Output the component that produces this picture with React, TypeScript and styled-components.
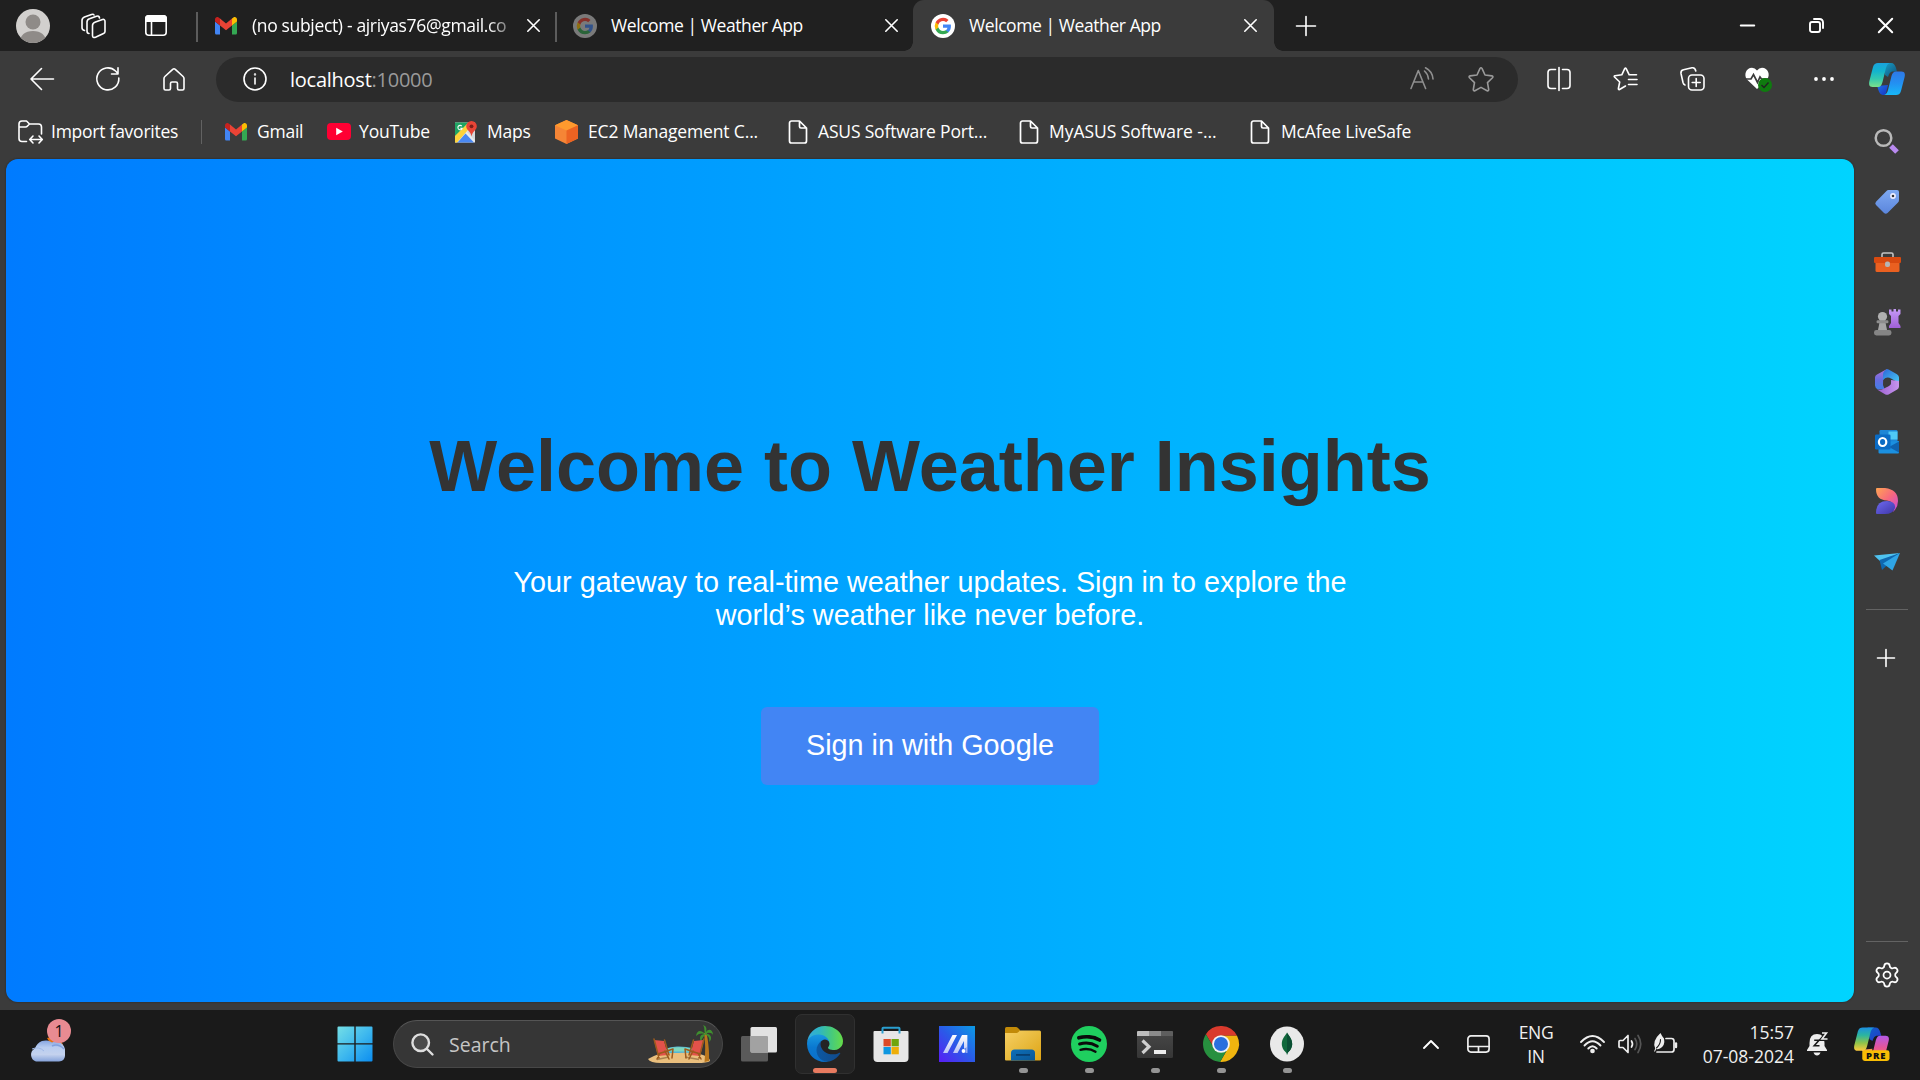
import React from "react";
import styled, { createGlobalStyle, css } from "styled-components";
import { Settings } from "lucide-react";

const ui = `"Open Sans", "Noto Sans", sans-serif`;
const arial = `"Liberation Sans", Arial, sans-serif`;

const GlobalStyle = createGlobalStyle`
  * { box-sizing: border-box; }
  html, body { margin: 0; padding: 0; background: #3b3b3b; }
  body { overflow: hidden; }
`;

const Screen = styled.div`
  width: 1920px;
  height: 1080px;
  display: flex;
  flex-direction: column;
  background: #3b3b3b;
  color: #fff;
  font-family: ${ui};
  overflow: hidden;
`;

const Cell = styled.div<{ $w: number }>`
  width: ${(p) => p.$w}px;
  height: 100%;
  flex: none;
  display: flex;
  align-items: center;
  justify-content: center;
`;

const Svg = styled.svg`
  display: block;
  flex: none;
  overflow: visible;
`;

const Label = styled.span<{ $ls?: number }>`
  font-size: 17.5px;
  line-height: 24px;
  letter-spacing: ${(p) => p.$ls ?? 0}px;
  white-space: nowrap;
  margin-bottom: 2px;
`;

/* ---------- tab strip ---------- */
const TabStrip = styled.header`
  height: 51px;
  flex: none;
  display: flex;
  align-items: center;
  background: #202020;
`;

const Avatar = styled.div`
  width: 34px;
  height: 34px;
  border-radius: 50%;
  overflow: hidden;
  background: #d2d0ce;
`;

const Tab = styled.div<{ $active?: boolean; $w: number }>`
  position: relative;
  width: ${(p) => p.$w}px;
  height: 51px;
  flex: none;
  display: flex;
  align-items: center;
  padding: 0 ${(p) => (p.$active ? 17 : 15)}px 0 18px;
  ${(p) =>
    p.$active
      ? css`
          background: #3b3b3b;
          border-radius: 11px 11px 0 0;
          &::before,
          &::after {
            content: "";
            position: absolute;
            bottom: 0;
            width: 9px;
            height: 9px;
          }
          &::before {
            left: -9px;
            background: radial-gradient(circle at 0 0, #202020 8.5px, #3b3b3b 9px);
          }
          &::after {
            right: -9px;
            background: radial-gradient(circle at 100% 0, #202020 8.5px, #3b3b3b 9px);
          }
        `
      : css`
          &::before {
            content: "";
            position: absolute;
            left: 0;
            top: 12px;
            width: 2px;
            height: 30px;
            background: #5c5c5c;
          }
        `}
`;

const TabTitle = styled(Label)<{ $fade?: boolean }>`
  flex: none;
  width: 266px;
  margin-left: 14px;
  margin-right: auto;
  ${(p) =>
    p.$fade &&
    css`
      mask-image: linear-gradient(to right, #000 236px, transparent 268px);
    `}
`;

const Spacer = styled.div`
  flex: 1;
`;

/* ---------- toolbar ---------- */
const Toolbar = styled.div`
  height: 57px;
  flex: none;
  display: flex;
  align-items: center;
  padding: 0 0 1px 9px;
`;

const AddressBar = styled.div`
  width: 1302px;
  height: 45px;
  margin: 0 8px 0 9px;
  display: flex;
  align-items: center;
  padding: 0 9px 0 9px;
  border-radius: 23px;
  background: #2b2b2b;
`;

const Url = styled.span`
  margin: 1px 0 0 5px;
  font-size: 20px;
  line-height: 26px;
  letter-spacing: -0.25px;
  color: #9a9a9a;
`;

const Host = styled.span`
  color: #fff;
`;

/* ---------- body ---------- */
const Body = styled.div`
  flex: 1;
  min-height: 0;
  display: flex;
`;

const Main = styled.div`
  width: 1854px;
  display: flex;
  flex-direction: column;
`;

const Favorites = styled.nav`
  height: 51px;
  flex: none;
  display: flex;
  align-items: center;
  padding: 0 0 4px 18px;
`;

const Favorite = styled.div<{ $w: number; $gap?: number }>`
  width: ${(p) => p.$w}px;
  flex: none;
  display: flex;
  align-items: center;
  gap: ${(p) => p.$gap ?? 10}px;
`;

const FavDivider = styled.div`
  width: 1px;
  height: 24px;
  margin-right: 23px;
  background: #626262;
`;

const Page = styled.main`
  flex: 1;
  margin: 0 0 8px 6px;
  border-radius: 12px;
  background: linear-gradient(to right, #007bff, #00d4ff);
  display: flex;
  flex-direction: column;
  align-items: center;
  font-family: ${arial};
  box-shadow: 0 0 2px #222;
`;

const Title = styled.h1`
  margin: 266px 0 0;
  font-size: 72px;
  line-height: 82px;
  font-weight: 700;
  white-space: nowrap;
  color: #333;
`;

const Lead = styled.p`
  width: 900px;
  margin: 59px 0 0;
  text-align: center;
  font-size: 28.8px;
  line-height: 33px;
`;

const SignIn = styled.button`
  width: 338px;
  height: 78px;
  margin-top: 75px;
  padding: 0 0 2px;
  border: 0;
  border-radius: 6px;
  background: #4285f4;
  color: #fff;
  font: 28.8px ${arial};
`;

/* ---------- sidebar ---------- */
const Sidebar = styled.aside`
  width: 66px;
  display: flex;
  flex-direction: column;
  align-items: center;
  padding-top: 2px;
`;

const SideItem = styled.div<{ $h?: number }>`
  width: 66px;
  height: ${(p) => p.$h ?? 60}px;
  flex: none;
  display: flex;
  align-items: center;
  justify-content: center;
`;

const SideRule = styled.div<{ $top: number; $bottom: number }>`
  width: 42px;
  height: 1px;
  flex: none;
  margin: ${(p) => p.$top}px 0 ${(p) => p.$bottom}px;
  background: #636363;
`;

/* ---------- taskbar ---------- */
const Taskbar = styled.footer`
  height: 70px;
  flex: none;
  display: flex;
  align-items: center;
  padding-bottom: 2px;
  background: #1a1a1a;
`;

const Weather = styled.div`
  position: relative;
  width: 320px;
  height: 70px;
  padding: 29px 0 0 29px;
  flex: none;
`;

const Badge = styled.span`
  position: absolute;
  left: 47px;
  top: 10px;
  width: 24px;
  height: 24px;
  border-radius: 50%;
  background: #e98b92;
  color: #111;
  font-size: 16px;
  line-height: 24px;
  text-align: center;
`;

const SearchBox = styled.div`
  width: 330px;
  height: 48px;
  margin: 0 3px;
  display: flex;
  align-items: center;
  padding: 0 9px 0 17px;
  border-radius: 24px;
  border: 1px solid #474747;
  border-top-color: #555;
  background: #363636;
`;

const SearchText = styled.span`
  margin: 0 auto 0 15px;
  font-size: 19.5px;
  color: #c6c6c6;
`;

const AppSlot = styled.div<{ $active?: boolean }>`
  position: relative;
  width: 60px;
  height: 60px;
  margin: 0 3px;
  flex: none;
  display: flex;
  align-items: center;
  justify-content: center;
  border-radius: 7px;
  ${(p) =>
    p.$active &&
    css`
      background: #242424;
      border: 1px solid #303030;
    `}
`;

const Running = styled.i<{ $active?: boolean }>`
  position: absolute;
  bottom: ${(p) => (p.$active ? 0 : 1)}px;
  width: ${(p) => (p.$active ? 24 : 9)}px;
  height: 5px;
  border-radius: 3px;
  background: ${(p) => (p.$active ? "#e87b60" : "#949494")};
`;

const Stack = styled.div<{ $w: number; $right?: boolean; $ls?: number }>`
  width: ${(p) => p.$w}px;
  flex: none;
  display: flex;
  flex-direction: column;
  align-items: ${(p) => (p.$right ? "flex-end" : "center")};
  font-size: 17.5px;
  line-height: 24px;
  letter-spacing: ${(p) => p.$ls ?? 0}px;
  color: #f0f0f0;
`;

/* ---------- icons ---------- */
type LineProps = { w: number; h?: number; sw?: number; c?: string; children: React.ReactNode };
const Line = ({ w, h = w, sw = 1.6, c = "#fff", children }: LineProps) => (
  <Svg width={w} height={h} viewBox={`0 0 ${w} ${h}`} fill="none" stroke={c} strokeWidth={sw} strokeLinecap="round" strokeLinejoin="round">
    {children}
  </Svg>
);

const Grad = ({ id, stops, v }: { id: string; stops: string[]; v?: "h" | "v" | "d" }) => (
  <linearGradient id={id} x1="0" y1="0" x2={v === "v" ? 0 : 1} y2={v === "h" ? 0 : 1}>
    {stops.map((s, i) => (
      <stop key={i} offset={i / (stops.length - 1)} stopColor={s} />
    ))}
  </linearGradient>
);

const CloseIcon = ({ s = 13, sw = 1.6 }) => (
  <Line w={s} sw={sw}>
    <path d={`M.8 .8L${s - 0.8} ${s - 0.8}M${s - 0.8} .8L.8 ${s - 0.8}`} />
  </Line>
);

const GmailIcon = ({ w = 22 }) => (
  <Svg width={w} height={w * 0.8} viewBox="52 42 88 66" preserveAspectRatio="none">
    <path fill="#4285f4" d="M58 108h14V74L52 59v43c0 3.32 2.69 6 6 6" />
    <path fill="#34a853" d="M120 108h14c3.32 0 6-2.69 6-6V59l-20 15" />
    <path fill="#fbbc04" d="M120 48v26l20-15v-8c0-7.42-8.47-11.65-14.4-7.2" />
    <path fill="#ea4335" d="M72 74V48l24 18 24-18v26L96 92" />
    <path fill="#c5221f" d="M52 51v8l20 15V48l-5.6-4.2c-5.94-4.45-14.4-.22-14.4 7.2" />
  </Svg>
);

const GoogleIcon = ({ dim }: { dim?: boolean }) => (
  <Svg width="24" height="24" viewBox="0 0 24 24" opacity={dim ? 0.5 : 1}>
    <circle cx="12" cy="12" r="12" fill={dim ? "#d4d4d4" : "#fff"} />
    <g transform="translate(3 3) scale(.75)">
      <path fill="#4285F4" d="M22.56 12.25c0-.78-.07-1.53-.2-2.25H12v4.26h5.92a5.06 5.06 0 0 1-2.2 3.32v2.77h3.57c2.08-1.92 3.27-4.74 3.27-8.1z" />
      <path fill="#34A853" d="M12 23c2.97 0 5.46-.98 7.28-2.66l-3.57-2.77c-.98.66-2.23 1.06-3.71 1.06-2.86 0-5.29-1.93-6.16-4.53H2.18v2.84A11 11 0 0 0 12 23z" />
      <path fill="#FBBC05" d="M5.84 14.09a6.6 6.6 0 0 1 0-4.18V7.07H2.18a11 11 0 0 0 0 9.86z" />
      <path fill="#EA4335" d="M12 5.38c1.62 0 3.06.56 4.21 1.64l3.15-3.15A11 11 0 0 0 2.18 7.07l3.66 2.84C6.71 7.31 9.14 5.38 12 5.38z" />
    </g>
  </Svg>
);

const FileIcon = () => (
  <Line w={20} h={24} sw={1.7}>
    <path d="M3.5 1H11.5L18.5 8V21A2 2 0 0 1 16.5 23H3.5A2 2 0 0 1 1.5 21V3A2 2 0 0 1 3.5 1ZM11.5 1V6.5A1.5 1.5 0 0 0 13 8H18.5" />
  </Line>
);

const ImportIcon = () => (
  <Line w={25} h={24}>
    <path d="M8.5 21.5H4A3 3 0 0 1 1 18.5V4A3 3 0 0 1 4 1H8.5L11.5 4H20.5A3 3 0 0 1 23.5 7V14M1 7H7.5Q8.7 7 9.5 6L11.5 4" />
    <path d="M12 19.5H24M15 16L11.7 19.5L15 23M21 16L24.3 19.5L21 23" />
  </Line>
);

const YouTubeIcon = () => (
  <Svg width="24" height="17" viewBox="0 0 24 17">
    <rect width="24" height="17" rx="4" fill="#ff0033" />
    <path d="M9.2 4.8V12.2L15.8 8.5Z" fill="#fff" />
  </Svg>
);

const MapsIcon = () => (
  <Svg width="22" height="22" viewBox="0 0 22 22">
    <path d="M0 1.500H20V21.500H0Z" fill="#e8eaed" />
    <path d="M0 1.500H14L0 15.500Z" fill="#1fa463" />
    <path d="M0 15L13.500 1.500H17V4.500L2 21.500H0Z" fill="#fdd33c" />
    <path d="M2.500 21.500L10.500 12.500L19 21.500Z" fill="#4a89f3" />
    <path d="M12 11L20 19.500V4Z" fill="#d6d8db" />
    <path d="M6.800 5.200A2.200 2.200 0 1 0 7.200 7.300H5.200" stroke="#fff" strokeWidth="1.100" fill="none" />
    <path d="M16.500 0A5.300 5.300 0 0 1 21.800 5.300C21.800 9 17.500 10 16.600 15.500C15.500 10 11.200 9 11.200 5.300A5.300 5.300 0 0 1 16.500 0Z" fill="#e84436" />
    <circle cx="16.500" cy="5.300" r="1.900" fill="#7e1f18" />
  </Svg>
);

const Ec2Icon = () => (
  <Svg width="23" height="24" viewBox="0 0 23 24">
    <path d="M11.500 0L23 5.200V18.500L11.500 24L0 18.500V5.200Z" fill="#f58536" />
    <path d="M11.500 0L23 5.200L11.500 10.500L0 5.200Z" fill="#ff9a2e" />
    <path d="M11.500 10.500L23 5.200V18.500L11.500 24Z" fill="#ec6322" />
  </Svg>
);

const CopilotIcon = ({ id, pre }: { id: string; pre?: boolean }) => (
  <Svg width="36" height={pre ? 34 : 32} viewBox={pre ? "0 0 37 34" : "0 0 36 32"}>
    <defs>
      <Grad id={id + "a"} v="v" stops={pre ? ["#1c8fe0", "#2bb5a0", "#8fc34a", "#ffc93c"] : ["#1aa3dd", "#12b4cf", "#35c9ae", "#7be08a"]} />
      <Grad id={id + "b"} stops={pre ? ["#0f63c9", "#2438c8"] : ["#17a2c9", "#12507a"]} />
      <Grad id={id + "c"} v="v" stops={pre ? ["#b45ae8", "#e4559a", "#ff7a55"] : ["#2f78e6", "#2390f2", "#17b8f8"]} />
      <Grad id={id + "d"} stops={pre ? ["#ffb347", "#f0704a"] : ["#1e6fe8", "#1733c0"]} />
    </defs>
    <path fill={`url(#${id}b)`} d="M14 0H22C25 0 26 2 27 5L28 8.500H24C21 8.500 20 11 19 14L16 12Z" />
    <path fill={`url(#${id}d)`} d="M8 23L19 22L18 26C17.300 29 17 32 15 32C11 32 10 29.500 8.500 24Z" />
    <path fill={`url(#${id}a)`} d="M9 0H21C17.500 1 17 5 16 9L13.500 19C12.500 22.500 11.500 24 9 24H3.500C0 24 -.3 21 .4 18L4 4C5 1 6.500 0 9 0Z" />
    <path fill={`url(#${id}c)`} d="M27 8.500H32.500C36 8.500 36.300 11.500 35.600 14L32 28C31 31 29.500 32 27 32H15C18.500 31 19 27 20 23L22.500 13C23.500 10 24.500 8.500 27 8.500Z" />
    {pre && (
      <>
        <rect x="8.500" y="23.500" width="28" height="11" rx="2.500" fill="#f8bd05" />
        <text x="22.800" y="32.500" textAnchor="middle" fontSize="9.800" fontWeight="800" letterSpacing=".9" fontFamily="Open Sans, sans-serif" fill="#111">
          PRE
        </text>
      </>
    )}
  </Svg>
);

const EdgeIcon = () => (
  <Svg width="36" height="36" viewBox="0 0 256 256">
    <defs>
      <Grad id="e1" v="h" stops={["#0c59a4", "#114a8b"]} />
      <Grad id="e2" v="v" stops={["#1b9de2", "#0a78d0", "#0b6fca"]} />
      <Grad id="e3" v="h" stops={["#35a9dc", "#2fb5c4", "#45c97f", "#66dc48"]} />
    </defs>
    <g transform="translate(-4.630 -4.920)">
      <path fill="url(#e1)" d="M235.680 195.460a93.730 93.730 0 0 1-10.540 4.710 101.870 101.870 0 0 1-35.900 6.460c-47.320 0-88.540-32.550-88.540-74.320A31.480 31.480 0 0 1 117.130 105c-42.800 1.800-53.800 46.400-53.800 72.530 0 73.880 68.090 81.370 82.760 81.370 7.910 0 19.840-2.300 27-4.560l1.310-.44a128.340 128.340 0 0 0 66.600-52.800 4 4 0 0 0-5.320-5.640Z" />
      <path fill="url(#e2)" d="M110.340 246.340A79.200 79.200 0 0 1 87.600 225a80.720 80.720 0 0 1 29.530-120c3.120-1.470 8.450-4.130 15.540-4a32.350 32.350 0 0 1 25.690 13 31.880 31.880 0 0 1 6.360 18.660c0-.21 24.460-79.600-80-79.600-43.900 0-80 41.660-80 78.210a130.150 130.150 0 0 0 12.110 56 128 128 0 0 0 156.380 67.110 75.550 75.550 0 0 1-62.780-8Z" />
      <path fill="url(#e3)" d="M156.940 153.780c-.81 1.050-3.300 2.500-3.300 5.660 0 2.610 1.700 5.120 4.720 7.230 14.380 10 41.490 8.680 41.560 8.680a59.560 59.560 0 0 0 30.270-8.350A61.380 61.380 0 0 0 260.630 114c.26-22.410-8-37.310-11.340-43.910-21.190-41.450-66.930-65.290-116.670-65.290a128 128 0 0 0-128 126.200c.48-36.540 36.800-66.050 80-66.050 3.500 0 23.460.34 42 10.070 16.340 8.580 24.900 18.940 30.850 29.210 6.180 10.670 7.280 24.150 7.280 29.520s-2.740 13.330-7.800 20Z" />
    </g>
  </Svg>
);

const StoreIcon = () => (
  <Svg width="36" height="36" viewBox="0 0 36 36">
    <path d="M9.500 8V2.500Q9.500 1.800 10.300 1.800H25.700Q26.500 1.800 26.500 2.500V8" fill="none" stroke="#2a9fd0" strokeWidth="2" />
    <path d="M.5 6Q.5 5 1.500 5H34.500Q35.500 5 35.500 6V32Q35.500 36 31.500 36H4.500Q.5 36 .5 32Z" fill="#e6e6e6" />
    <path d="M9.500 5V7.500M26.500 5V7.500" stroke="#2a9fd0" strokeWidth="2" />
    <rect x="10.500" y="13" width="7.300" height="7.300" fill="#dd4a26" />
    <rect x="18.500" y="13" width="7.300" height="7.300" fill="#6fa50c" />
    <rect x="10.500" y="21" width="7.300" height="7.300" fill="#0e97e0" />
    <rect x="18.500" y="21" width="7.300" height="7.300" fill="#eeae08" />
  </Svg>
);

const MyAsusIcon = () => (
  <Svg width="36" height="36" viewBox="0 0 36 36">
    <defs>
      <linearGradient id="asus" x1="0" y1="1" x2="1" y2="0">
        <stop offset="0" stopColor="#5a1df5" />
        <stop offset=".5" stopColor="#2a5ae8" />
        <stop offset="1" stopColor="#0b9be4" />
      </linearGradient>
      <Grad id="asus2" v="v" stops={["#ffffff", "#b9c2f5"]} />
    </defs>
    <rect width="36" height="36" fill="url(#asus)" />
    <path fill="url(#asus2)" d="M13.500 9H18L8.500 27H4ZM23 9H28V21L25 23V15L18.500 27H14Z" />
    <circle cx="24.500" cy="25" r="1.900" fill="#fff" />
    <path fill="url(#asus2)" d="M28.500 9V27H26.500V9Z" opacity=".7" />
  </Svg>
);

const FolderIcon = () => (
  <Svg width="36" height="34" viewBox="0 0 36 34">
    <defs>
      <Grad id="fold" stops={["#f7cf63", "#e9bb3e", "#dfa414"]} />
      <Grad id="fold2" stops={["#0e6fb8", "#0a5796"]} />
    </defs>
    <path d="M0 1.500Q0 0 1.500 0H11Q12 0 13 1L15 3V8H0Z" fill="#c28a08" />
    <path d="M0 6H11.500Q12.500 6 13.500 5L15 3.500H34.500Q36 3.500 36 5V32.500Q36 33.500 35 33.500H1Q0 33.500 0 32.500Z" fill="url(#fold)" />
    <path d="M6 33.500V26Q6 22.500 9.500 22.500H26.500Q30 22.500 30 26V33.500Z" fill="url(#fold2)" />
    <rect x="11" y="27" width="14" height="1.800" fill="#083f70" />
  </Svg>
);

const SpotifyIcon = () => (
  <Svg width="36" height="36" viewBox="0 0 36 36" fill="none" stroke="#0b0b0b" strokeLinecap="round">
    <circle cx="18" cy="18" r="18" fill="#1fcf5f" stroke="none" />
    <path d="M7.800 11.800C14 10 22.500 10.500 28.500 14" strokeWidth="3.600" />
    <path d="M8.600 18C14.500 16.300 21 17 26.300 20.200" strokeWidth="3" />
    <path d="M9.500 23.800C14.500 22.500 20 23 24.500 25.700" strokeWidth="2.400" />
  </Svg>
);

const TerminalIcon = () => (
  <Svg width="36" height="27" viewBox="0 0 36 27">
    <defs>
      <Grad id="term" v="v" stops={["#484848", "#363636"]} />
    </defs>
    <rect width="36" height="27" rx="1.500" fill="url(#term)" />
    <path d="M0 5V1Q0 0 1 0H12V5Z" fill="#bdbdbd" />
    <rect x="12" width="12" height="5" fill="#8c8c8c" />
    <path d="M24 0H35Q36 0 36 1V5H24Z" fill="#5e5e5e" />
    <path d="M5.500 9.500L12 15.700L5.500 22" fill="none" stroke="#cfcfcf" strokeWidth="3.200" />
    <rect x="17" y="19" width="12" height="4" fill="#ececec" />
  </Svg>
);

const ChromeIcon = () => (
  <Svg width="36" height="36" viewBox="2 2 44 44">
    <path fill="#d93a2d" d="M24 14H43.600A22 22 0 0 0 5.540 12.030L15.340 29A10 10 0 0 1 24 14Z" />
    <path fill="#f0b50f" d="M43.600 14A22 22 0 0 1 22.860 45.970L32.660 29A10 10 0 0 0 24 14Z" />
    <path fill="#27903f" d="M22.860 45.970A22 22 0 0 1 5.540 12.030L15.340 29A10 10 0 0 0 32.660 29Z" />
    <circle cx="24" cy="24" r="10.800" fill="#f4f4f4" />
    <circle cx="24" cy="24" r="8.600" fill="#2a6fdd" />
  </Svg>
);

const MongoIcon = () => (
  <Svg width="34" height="36" viewBox="0 0 34 36">
    <ellipse cx="17" cy="18" rx="17" ry="17.500" fill="#e9e9e9" />
    <path d="M17 6.500C18 9 22.200 12 22.200 18C22.200 22.500 19 25.500 17.600 27L17 29L16.400 27C15 25.500 11.800 22.500 11.800 18C11.800 12 16 9 17 6.500Z" fill="#10693c" />
    <path d="M17 6.500C18 9 22.200 12 22.200 18C22.200 22.500 19 25.500 17.600 27L17 29Z" fill="#0a4f33" />
  </Svg>
);

const TaskViewIcon = () => (
  <Svg width="36" height="35" viewBox="0 0 36 35">
    <rect y="9" width="27" height="25.500" rx="1.500" fill="#5a5a5a" />
    <rect x="9.500" y="0" width="26.500" height="25.500" rx="1.500" fill="#e2e2e2" />
    <rect x="9.500" y="9" width="17.500" height="16.500" rx="1" fill="#a2a2a2" />
  </Svg>
);

const WindowsIcon = () => (
  <Svg width="36" height="36" viewBox="0 0 36 36">
    <defs>
      <linearGradient id="win" gradientUnits="userSpaceOnUse" x1="0" y1="0" x2="36" y2="36">
        <stop offset="0" stopColor="#76e0e6" />
        <stop offset=".5" stopColor="#3fb9ee" />
        <stop offset="1" stopColor="#0a8cf0" />
      </linearGradient>
    </defs>
    <path fill="url(#win)" d="M1.500 .5H17.300V17.200H.5V1.500Q.5 .5 1.500 .5ZM18.700 .5H34.500Q35.500 .5 35.500 1.500V17.200H18.700ZM.5 18.600H17.300V35.500H1.500Q.5 35.500 .5 34.500ZM18.700 18.600H35.500V34.500Q35.500 35.500 34.500 35.500H18.700Z" />
  </Svg>
);

const BeachIcon = () => (
  <Svg width="66" height="38" viewBox="0 0 66 38">
    <path d="M14 29Q16 22 30 21.500Q48 21 52 29Z" fill="#52b5d6" />
    <path d="M20 23.500Q32 21 44 23.500L42 26.500H22Z" fill="#7fd6bd" />
    <path d="M1 34Q6 31 12 29Q20 27.500 31 28Q48 27 56 30Q63 32 63 36Q60 38 50 38H14Q3 38 1 34Z" fill="#eabf7d" />
    <path d="M10 34.500L22 32M38 32L52 34.500" stroke="#a98250" strokeWidth="1.600" />
    <path d="M57.500 37C58.500 28 58.500 17 57 8L59.500 8C61.500 17 62.500 28 62 36Z" fill="#b9761c" />
    <path d="M58 9C53 4 50 6 49 11C52 8 55 8 58 9C53 9 52 13 54 17C55 13 57 11 58.500 9.500C62 11 63 14 62 17C66 14 64 9 59 8.500C62 7 65 8 66 10C66 5 62 3 59 7C60 3 59 1 56 0C58 3 57 5 58 9Z" fill="#3f8f2f" />
    <path d="M7 15L17 16L21 30L11 31Z" fill="#e2524a" />
    <path d="M7 14L12 33M17.500 15L22 30M11 29L26 24M22 34L18 26M26 24L25 33M10 34L13 28" stroke="#9c5a1d" strokeWidth="1.500" fill="none" strokeLinecap="round" />
    <path d="M57 15L47 16L43 30L53 31Z" fill="#e2524a" />
    <path d="M57 14L52 33M46.500 15L42 30M53 29L38 24M42 34L46 26M38 24L39 33M54 34L51 28" stroke="#9c5a1d" strokeWidth="1.500" fill="none" strokeLinecap="round" />
  </Svg>
);

const CloudIcon = () => (
  <Svg width="37" height="24" viewBox="0 0 37 24">
    <defs>
      <Grad id="cloud" v="v" stops={["#86a5e0", "#b9cdf0", "#c4d2ee", "#86a3da"]} />
    </defs>
    <path d="M18 0Q30 -4 34 7L24 10Z" fill="#e8720c" />
    <path d="M7 23.500A7 7 0 0 1 6 10.500A11 11 0 0 1 23 4.500A9 9 0 0 1 36 13V18Q35.500 23 30 23.500Z" fill="url(#cloud)" />
    <path d="M3 11Q10 8 15 13" stroke="#9fb8e6" fill="none" />
    <path d="M23 8Q29 5 35 11" stroke="#6f93dc" fill="none" strokeWidth="1.500" opacity=".7" />
  </Svg>
);

/* ---------- sidebar icons ---------- */
const SideSearch = () => (
  <Svg width="26" height="26" viewBox="0 0 26 26">
    <circle cx="9.500" cy="10" r="7.800" fill="none" stroke="#b9b9b9" strokeWidth="2.500" />
    <path d="M17 18L23 24" stroke="#b98af0" strokeWidth="5.200" />
  </Svg>
);
const SideTag = () => (
  <Svg width="24" height="24" viewBox="0 0 24 24">
    <defs><Grad id="tag" v="v" stops={["#7ea9f2", "#5b86dc"]} /></defs>
    <path d="M13.500 0H22Q24 0 24 2V10Q24 11.500 23 12.500L12.500 23Q10.800 24.500 9 23L1 15Q-.5 13.500 1 11.800L11.500 1Q12.300 0 13.500 0Z" fill="url(#tag)" />
    <circle cx="18" cy="6" r="2.100" fill="#333" stroke="#eef" strokeWidth="1.600" />
  </Svg>
);
const SideToolbox = () => (
  <Svg width="27" height="20" viewBox="0 0 27 20">
    <path d="M8 6V2.500Q8 1 9.500 1H17.500Q19 1 19 2.500V6" fill="none" stroke="#c4c4c4" strokeWidth="1.600" />
    <path d="M1.500 9H25.500V18.500Q25.500 20 24 20H3Q1.500 20 1.500 18.500Z" fill="#ea6020" />
    <rect y="5" width="27" height="6" rx="1" fill="#d84a10" />
    <rect x="11" y="9.500" width="5" height="5.500" rx="2" fill="#b5b5b5" />
  </Svg>
);
const SideGames = () => (
  <Svg width="27" height="27" viewBox="0 0 27 27">
    <defs><Grad id="rook" v="v" stops={["#c59bf6", "#a05fd8"]} /></defs>
    <path d="M15 .5H17.500V2.500H19.500V0H22V2.500H24V.5H26.500V5L24.500 7V14L26.500 17V19H15V17L17 14V7L15 5Z" fill="url(#rook)" />
    <circle cx="8.500" cy="7.500" r="4.600" fill="#b0b0b0" />
    <path d="M6 11H11L13 21H4Z" fill="#a5a5a5" />
    <rect x="2.500" y="11.300" width="12" height="3" rx="1.400" fill="#8d8d8d" />
    <rect x="0" y="21" width="17.500" height="5.500" rx="2.400" fill="#858585" />
  </Svg>
);
const SideM365 = () => (
  <Svg width="24" height="26" viewBox="0 0 24 26">
    <defs>
      <Grad id="m1" v="v" stops={["#b072d8", "#6a6be0", "#3f7fe6"]} />
      <Grad id="m2" stops={["#2d66d8", "#47cdf4"]} />
      <Grad id="m3" v="h" stops={["#9a5fd0", "#c795ee"]} />
    </defs>
    <path fill="url(#m1)" d="M12 0L9 9L8 16L9.500 20L3 20.500Q0 19 0 16.500V8.500Q0 6.500 2 5.500Z" />
    <path fill="url(#m2)" d="M12 0Q13 0 14 .7L22 5.300Q24 6.500 24 8.500V14L16 9.500Q12 7 8 11V5Q8 2.500 12 0Z" />
    <path fill="url(#m3)" d="M24 12V17.500Q24 19.500 22.200 20.500L14 25.300Q12 26.300 10 25.300L2 20.500Q6 21.500 9 19.500L14 17Q16.500 15.500 16 11Z" />
    <path d="M12 8.800L15.800 11V15.200L12 17.400L8.200 15.200V11Z" fill="#3b3b3b" />
  </Svg>
);
const SideOutlook = () => (
  <Svg width="24" height="24" viewBox="0 0 24 24">
    <rect x="4.500" y="0" width="18" height="16" rx="1.200" fill="#1d86d6" />
    <rect x="13.500" y="1.500" width="9" height="8" fill="#4fc9f6" />
    <path d="M3.500 12L24 11V22.500Q24 23.500 23 23.500H4.500Q3.500 23.500 3.500 22.500Z" fill="#1b90e0" />
    <path d="M24 11.500L14 17L24 22.500Z" fill="#0f62ae" />
    <rect y="4.500" width="15.500" height="15" rx="1.300" fill="#0a6bc4" />
    <ellipse cx="7.600" cy="12" rx="3.700" ry="4" fill="none" stroke="#fff" strokeWidth="2.200" />
  </Svg>
);
const SideDesigner = () => (
  <Svg width="22" height="28" viewBox="0 0 22 28">
    <defs>
      <Grad id="d1" stops={["#ffa552", "#f7687e", "#c347e0"]} />
      <Grad id="d2" stops={["#6f6af0", "#3e36a8"]} />
    </defs>
    <path fill="url(#d1)" d="M1 0H9Q22 1.500 22 13Q22 19.500 17 24Q20 14 11 12.500Q0 12 0 1Q0 0 1 0Z" />
    <path fill="url(#d2)" d="M0 25Q0 13 11 13Q20 13.500 19 20Q17 26 9 26H1Q0 26 0 25Z" />
  </Svg>
);
const SideDrop = () => (
  <Svg width="26" height="18" viewBox="0 0 26 18">
    <path d="M0 2.500L26 0L7 9Z" fill="#4fc3f0" />
    <path d="M5.500 7L26 0L8 17Z" fill="#0f68b0" />
    <path d="M9 10.500L26 0L18.500 17.500Z" fill="#2fa5e6" />
  </Svg>
);

const favorites = [
  { icon: <GmailIcon />, text: "Gmail", w: 102, gap: 10, ls: -0.25 },
  { icon: <YouTubeIcon />, text: "YouTube", w: 128, gap: 8, ls: -0.15 },
  { icon: <MapsIcon />, text: "Maps", w: 100, gap: 10, ls: -0.2 },
  { icon: <Ec2Icon />, text: "EC2 Management C...", w: 233, gap: 10, ls: -0.15 },
  { icon: <FileIcon />, text: "ASUS Software Port...", w: 231, gap: 10, ls: -0.18 },
  { icon: <FileIcon />, text: "MyASUS Software -...", w: 231, gap: 10, ls: -0.05 },
  { icon: <FileIcon />, text: "McAfee LiveSafe", w: 200, gap: 11, ls: -0.15 },
];

export default function App() {
  return (
    <>
      <GlobalStyle />
      <Screen>
        <TabStrip>
          <Cell $w={66}>
            <Avatar>
              <Svg width="34" height="34" viewBox="0 0 34 34">
                <circle cx="17" cy="13" r="7.500" fill="#8f8b88" />
                <path d="M3.500 34C4 26 9 22 17 22S30 26 30.500 34Z" fill="#8f8b88" />
              </Svg>
            </Avatar>
          </Cell>
          <Cell $w={54}>
            <Line w={25} h={24}>
              <path d="M14.500 7.500L21.500 5Q24 4.500 24 7V17Q24 18.500 22.500 19L15 22.500Q11.500 24 11.500 21V11Q11.500 8.500 14.500 7.500Z" transform="translate(0 .5)" />
              <path d="M8 19.500Q6 19.500 6 17V8Q6 5.500 8.500 4.700L15.500 2.200Q18 1.500 18.500 4" />
              <path d="M3.500 16.500Q1 16 1 13.500V6.500Q1 4 3.500 3L10.500 .5Q12.500 0 13 1" />
            </Line>
          </Cell>
          <Cell $w={72}>
            <Svg width="22" height="21" viewBox="0 0 22 21">
              <rect x=".8" y=".8" width="20.400" height="19.400" rx="3" fill="none" stroke="#fff" strokeWidth="1.600" />
              <path d="M0 7V3.500Q0 0 3.500 0H18.500Q22 0 22 3.500V7Z" fill="#fff" />
              <path d="M6.500 7V20" stroke="#fff" strokeWidth="1.600" />
            </Svg>
          </Cell>
          <Cell $w={4} />
          <Tab $w={359}>
            <Cell $w={24}><GmailIcon /></Cell>
            <TabTitle $fade $ls={-0.34}>(no subject) - ajriyas76@gmail.co</TabTitle>
            <CloseIcon />
          </Tab>
          <Tab $w={358}>
            <GoogleIcon dim />
            <TabTitle $ls={-0.42}>Welcome | Weather App</TabTitle>
            <CloseIcon />
          </Tab>
          <Tab $active $w={361}>
            <GoogleIcon />
            <TabTitle $ls={-0.42}>Welcome | Weather App</TabTitle>
            <CloseIcon />
          </Tab>
          <Cell $w={64}>
            <Line w={20}><path d="M10 .5V19.500M.5 10H19.500" /></Line>
          </Cell>
          <Spacer />
          <Cell $w={69}><Line w={15} sw={2}><path d="M.8 7.500H14.200" /></Line></Cell>
          <Cell $w={69}>
            <Line w={15} sw={1.900}>
              <rect x="1" y="4" width="10" height="10" rx="2" />
              <path d="M5 1H10.500Q14 1 14 4.500V10" />
            </Line>
          </Cell>
          <Cell $w={69}><CloseIcon s={15} sw={2} /></Cell>
        </TabStrip>

        <Toolbar>
          <Cell $w={66}><Line w={24}><path d="M23.500 12H1M11.500 1.500L1 12L11.500 22.500" /></Line></Cell>
          <Cell $w={66}>
            <Line w={24}><path d="M22.800 11A11 11 0 1 1 19.500 4L22 6.500M22 .8V7H15.500" /></Line>
          </Cell>
          <Cell $w={66}>
            <Line w={22} h={23}>
              <path d="M1 10.500Q1 9.300 1.900 8.500L9.700 1.300Q11 .2 12.300 1.300L20.100 8.500Q21 9.300 21 10.500V20.500Q21 22 19.500 22H16Q14.500 22 14.500 20.500V15.500Q14.500 14 13 14H9Q7.500 14 7.500 15.500V20.500Q7.500 22 6 22H2.500Q1 22 1 20.500Z" />
            </Line>
          </Cell>
          <AddressBar>
            <Cell $w={60}>
              <Line w={24}><circle cx="12" cy="12" r="11" /><path d="M12 11V17" /><circle cx="12" cy="7.400" r=".4" /></Line>
            </Cell>
            <Url><Host>localhost</Host>:10000</Url>
            <Spacer />
            <Cell $w={60}>
              <Line w={24} c="#8f8f8f">
                <path d="M1 21.500L8.300 3.500L15.600 21.500M3.700 15H13M14.500 4Q18 7 18.500 12M15.500 .8Q22.500 4.500 23 12" />
              </Line>
            </Cell>
            <Cell $w={57}>
              <Line w={26} h={25} c="#9a9a9a">
                <path d="M11.900 1.600Q13 0 14.100 1.600L17 8L23.900 8.900Q25.600 9.300 24.500 10.700L19.500 15.600L20.700 22.500Q20.700 24.300 19.100 23.700L13 20.400L6.900 23.700Q5.300 24.300 5.300 22.500L6.500 15.600L1.500 10.700Q.4 9.300 2.100 8.900L9 8Z" />
              </Line>
            </Cell>
          </AddressBar>
          <Cell $w={66}>
            <Line w={24} h={24}>
              <path d="M8.500 2.500H4Q1 2.500 1 5.500V18.500Q1 21.500 4 21.500H8.500M15.500 2.500H20Q23 2.500 23 5.500V18.500Q23 21.500 20 21.500H15.500M12 .5V23.500" />
            </Line>
          </Cell>
          <Cell $w={67}>
            <Line w={25} h={24}>
              <path d="M12.500 19L6.500 22.500Q5.300 23 5.400 21.500L6.700 15L1.500 10Q.7 9 2 8.700L8.800 7.800L11.700 1.700Q12.500 .5 13.200 1.700L16.200 7.800H23.500M15.500 12.500H24M15.500 17.500H24" />
            </Line>
          </Cell>
          <Cell $w={66}>
            <Line w={25} h={24}>
              <rect x="8.500" y="8" width="15.500" height="15" rx="3.500" />
              <path d="M16.200 11.500V19.500M12.200 15.500H20.200M5 18Q3.500 17.500 3 15.500L1 6.500Q.5 3.500 3.500 2.800L12 .8Q15 .2 15.800 4" />
            </Line>
          </Cell>
          <Cell $w={66}>
            <Svg width="27" height="25" viewBox="0 0 27 25">
              <path d="M12 22L2 12.500C-1.500 8 1 .8 7 .8Q10 .8 12 3.500Q14 .8 17 .8C23 .8 25.800 8 22 12.500Z" fill="#fff" />
              <path d="M0 12H6L8.500 7.500L12.500 15.500L15 10L16.500 12H24" stroke="#3b3b3b" strokeWidth="1.700" fill="none" />
              <circle cx="20" cy="18" r="7" fill="#0f7b0f" />
              <path d="M16.500 18L19 20.500L23.500 15.500" stroke="#222" strokeWidth="1.400" fill="none" />
            </Svg>
          </Cell>
          <Cell $w={66}>
            <Svg width="20" height="4" viewBox="0 0 20 4" fill="#fff">
              <circle cx="2" cy="2" r="1.900" /><circle cx="10" cy="2" r="1.900" /><circle cx="18" cy="2" r="1.900" />
            </Svg>
          </Cell>
          <Cell $w={60}><CopilotIcon id="cp" /></Cell>
        </Toolbar>

        <Body>
          <Main>
            <Favorites>
              <Favorite $w={183} $gap={8}><ImportIcon /><Label $ls={-0.25}>Import favorites</Label></Favorite>
              <FavDivider />
              {favorites.map((f) => (
                <Favorite key={f.text} $w={f.w} $gap={f.gap}>{f.icon}<Label $ls={f.ls}>{f.text}</Label></Favorite>
              ))}
            </Favorites>
            <Page>
              <Title>Welcome to Weather Insights</Title>
              <Lead>Your gateway to real-time weather updates. Sign in to explore the world’s weather like never before.</Lead>
              <SignIn>Sign in with Google</SignIn>
            </Page>
          </Main>
          <Sidebar>
            <SideItem $h={62}><SideSearch /></SideItem>
            <SideItem><SideTag /></SideItem>
            <SideItem><SideToolbox /></SideItem>
            <SideItem><SideGames /></SideItem>
            <SideItem><SideM365 /></SideItem>
            <SideItem><SideOutlook /></SideItem>
            <SideItem><SideDesigner /></SideItem>
            <SideItem><SideDrop /></SideItem>
            <SideRule $top={17} $bottom={18} />
            <SideItem><Line w={20} h={18}><path d="M9 .5V17.500M.5 9H17.500" /></Line></SideItem>
            <Spacer />
            <SideRule $top={0} $bottom={3} />
            <SideItem $h={65}><Settings size={28} strokeWidth={1.500} color="#fff" style={{ marginBottom: 5 }} /></SideItem>
          </Sidebar>
        </Body>

        <Taskbar>
          <Weather><CloudIcon /><Badge>1</Badge></Weather>
          <Cell $w={70}><WindowsIcon /></Cell>
          <SearchBox>
            <Line w={23} sw={2.400} c="#dedede"><circle cx="9.700" cy="9.700" r="8.300" fill="#4a4a4a" /><path d="M16 16L21.500 21.500" /></Line>
            <SearchText>Search</SearchText>
            <BeachIcon />
          </SearchBox>
          <AppSlot><TaskViewIcon /></AppSlot>
          <AppSlot $active><EdgeIcon /><Running $active /></AppSlot>
          <AppSlot><StoreIcon /></AppSlot>
          <AppSlot><MyAsusIcon /></AppSlot>
          <AppSlot><FolderIcon /><Running /></AppSlot>
          <AppSlot><SpotifyIcon /><Running /></AppSlot>
          <AppSlot><TerminalIcon /><Running /></AppSlot>
          <AppSlot><ChromeIcon /><Running /></AppSlot>
          <AppSlot><MongoIcon /><Running /></AppSlot>
          <Spacer />
          <Cell $w={48}><Line w={16} h={9} sw={1.900}><path d="M1 8L8 1L15 8" /></Line></Cell>
          <Cell $w={47}>
            <Line w={23} h={18} sw={1.700} c="#eee"><rect x=".9" y=".9" width="21.200" height="16.200" rx="3" /><path d="M1 11.500H22M11.500 11.500V17" /></Line>
          </Cell>
          <Stack $w={68} $ls={-0.3}><span>ENG</span><span>IN</span></Stack>
          <Cell $w={45}>
            <Line w={25} h={18} sw={1.900} c="#eee">
              <path d="M1 7Q12.500 -5 24 7M4.500 10.500Q12.500 2 20.500 10.500M8.300 13.500Q12.500 9 16.700 13.500" />
              <circle cx="12.500" cy="16" r="1.400" fill="#eee" />
            </Line>
          </Cell>
          <Cell $w={30}>
            <Line w={24} h={20} sw={1.700} c="#eee">
              <path d="M1 7.500Q1 6.500 2 6.500H5L10 1.500V18.500L5 13.500H2Q1 13.500 1 12.500ZM13.500 7Q15.500 10 13.500 13" />
              <path d="M17 4.500Q20.500 10 17 15.500M20 1.500Q25.500 10 20 18.500" stroke="#555" />
            </Line>
          </Cell>
          <Cell $w={40}>
            <Line w={25} h={20} sw={1.700} c="#eee">
              <path d="M13 4.500H18.500Q21 4.500 21 7V15.500Q21 18 18.500 18H4" />
              <path d="M23 9.500V13" strokeWidth="2.400" />
              <path d="M1 17.500L2.200 14.500Q-1.200 7 7.500 -1Q9 2.500 11 4.500Q12.500 11.500 7 14.500Q4.500 15.500 3.200 15L2 17.500Z" fill="#eee" stroke="none" />
              <path d="M7.500 5.500Q7.500 10.500 3.500 14" stroke="#1a1a1a" strokeWidth="1.100" />
            </Line>
          </Cell>
          <Stack $w={109} $right><span>15:57</span><span>07-08-2024</span></Stack>
          <Cell $w={48}>
            <Svg width="22" height="24" viewBox="0 0 22 24">
              <path d="M2.500 11Q2.500 2 10 2Q17.500 2 17.500 11V14L20 18V19H0V18L2.500 14Z" fill="#eee" />
              <path d="M6.500 20.500H13.500Q12.500 23.500 10 23.500T6.500 20.500Z" fill="#eee" />
              <path d="M7.200 8.200H12L7.200 13.800H12.500" stroke="#1a1a1a" strokeWidth="1.600" fill="none" />
              <path d="M14.500 .8H20L14.500 7.200H20.500" stroke="#1a1a1a" strokeWidth="3.400" fill="none" />
              <path d="M15 1H19.500L15 7H20.500" stroke="#eee" strokeWidth="1.600" fill="none" />
            </Svg>
          </Cell>
          <Cell $w={78}><Cell $w={60}><CopilotIcon id="pre" pre /></Cell><Spacer /></Cell>
        </Taskbar>
      </Screen>
    </>
  );
}
